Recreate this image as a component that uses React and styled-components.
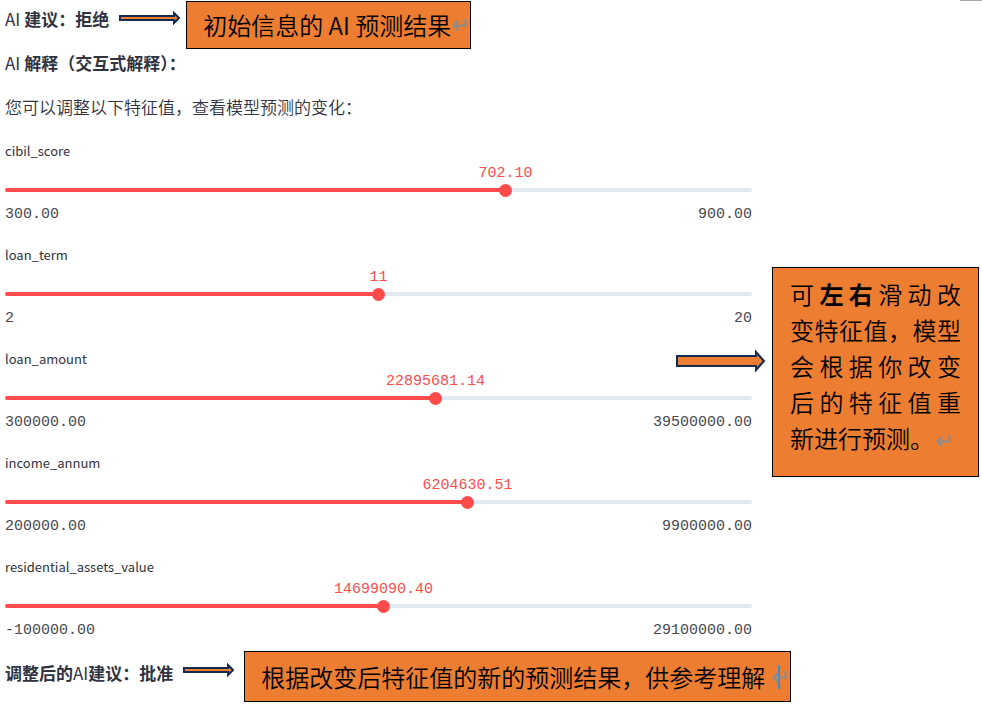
import React, { useState } from "react";
import styled, { createGlobalStyle } from "styled-components";

const sans = `"Noto Sans CJK SC", "Noto Sans", sans-serif`;
const mono = `"Liberation Mono", "DejaVu Sans Mono", monospace`;

const GlobalStyle = createGlobalStyle`
  *, *::before, *::after { box-sizing: border-box; }
  body { margin: 0; background: #fff; color: #31333f; font-family: ${sans}; }
  h1, h2, p { margin: 0; }
`;

const Page = styled.main`
  position: relative;
  padding: 1px 3px 0 5px;
  overflow-x: hidden;
`;

const CornerMark = styled.span`
  position: absolute;
  top: 0;
  right: 0;
  width: 22px;
  height: 1px;
  background: #a6a6a6;
`;

const ResultRow = styled.section`
  display: flex;
  align-items: flex-start;
`;

const Heading = styled.h2`
  font-size: 17px;
  font-weight: 700;
  line-height: ${(p) => p.$line}px;
  white-space: nowrap;
`;

const Latin = styled.span`
  font-weight: 400;
`;

const Intro = styled.p`
  margin: 16px 0 18px;
  font-size: 17px;
  font-weight: 350;
  line-height: 28px;
`;

const ArrowSlot = styled.span`
  display: flex;
  align-items: center;
  height: ${(p) => p.$height}px;
  margin: 0 ${(p) => p.$after}px 0 10px;
`;

const Note = styled.div`
  display: flex;
  align-items: center;
  justify-content: space-between;
  flex: 0 1 ${(p) => p.$width}px;
  height: ${(p) => p.$height}px;
  padding: 0 3px 0 16px;
  border: 1px solid #000;
  background: #ed7d31;
  color: #000;
  font-size: 24px;
  font-weight: 350;
  line-height: 36px;
  white-space: nowrap;
`;

const NoteEnd = styled.span`
  display: flex;
  align-items: center;
`;

const Caret = styled.span`
  flex: none;
  width: 2px;
  height: 24px;
  margin-right: -8px;
  background: #2f8fdc;
`;

const Columns = styled.div`
  display: grid;
  grid-template-columns: minmax(0, 1fr) 207px;
  column-gap: 20px;
  align-items: start;
  margin-bottom: 9px;
`;

const SliderList = styled.div`
  display: grid;
  row-gap: 17px;
`;

const Field = styled.div`
  display: flex;
  flex-direction: column;
`;

const FieldLabel = styled.label`
  font-size: 13px;
  line-height: 24px;
`;

const ValueLane = styled.div`
  position: relative;
  height: 20px;
`;

const Value = styled.output`
  position: absolute;
  transform: translateX(-50%);
  color: #ff4b4b;
  font-family: ${mono};
  font-size: 15px;
  line-height: 22px;
`;

const Control = styled.div`
  display: grid;
  align-items: center;
  height: 14px;

  & > * { grid-area: 1 / 1; }
`;

const Track = styled.div`
  height: 4px;
  border-radius: 2px;
  background: #e4e8f1;
  overflow: hidden;
`;

const Fill = styled.div`
  height: 4px;
  background: #ff4b4b;
`;

const Range = styled.input`
  appearance: none;
  width: calc(100% + 14px);
  height: 14px;
  margin: 0 -7px;
  background: transparent;
  cursor: pointer;

  &::-webkit-slider-thumb {
    appearance: none;
    width: 13px;
    height: 13px;
    border-radius: 50%;
    background: #ff4b4b;
  }
`;

const Limits = styled.div`
  display: flex;
  justify-content: space-between;
  margin-top: 7px;
  color: #464852;
  font-family: ${mono};
  font-size: 15px;
  line-height: 22px;
`;

const SideNote = styled.aside`
  position: relative;
  margin-top: 128px;
  padding: 8px 17px 20px;
  border: 1px solid #000;
  background: #ed7d31;
  color: #000;
  font-size: 24px;
  font-weight: 350;
  line-height: 36px;
`;

const NoteLine = styled.span`
  display: block;
  white-space: nowrap;
  text-align: justify;
  text-align-last: ${(p) => (p.$last ? "left" : "justify")};
`;

const Strong = styled.strong`
  font-weight: 700;
`;

const SideArrow = styled.span`
  position: absolute;
  top: 81px;
  right: calc(100% + 7px);
  display: flex;
`;

function SmallArrow({ length }) {
  const tip = length - 1;
  const neck = length - 6;
  return (
    <svg width={length} height="14" viewBox={`0 0 ${length} 14`} aria-hidden="true">
      <path
        d={`M1 5H${neck}V2L${tip} 7L${neck} 12V9H1Z`}
        fill="#ed7d31"
        stroke="#172c51"
        strokeWidth="2"
      />
    </svg>
  );
}

function LargeArrow() {
  return (
    <svg width="90" height="24" viewBox="0 0 90 24" aria-hidden="true">
      <path d="M1 7H80V3L88 12L80 21V17H1Z" fill="#ed7d31" stroke="#172c51" strokeWidth="2" />
    </svg>
  );
}

const ReturnSvg = styled.svg`
  flex: none;
  margin-left: ${(p) => p.$gap}px;
`;

function ReturnMark({ gap = 0 }) {
  return (
    <ReturnSvg $gap={gap} width="15" height="14" viewBox="0 0 15 14" aria-hidden="true">
      <path d="M13.5 1V7.5H1.5M6.5 2.5L1.5 7.5L6.5 12.5" fill="none" stroke="#8a8c90" strokeWidth="2" />
    </ReturnSvg>
  );
}

const features = [
  { name: "cibil_score", min: 300, max: 900, value: 702.1, digits: 2 },
  { name: "loan_term", min: 2, max: 20, value: 11, digits: 0 },
  { name: "loan_amount", min: 300000, max: 39500000, value: 22895681.14, digits: 2 },
  { name: "income_annum", min: 200000, max: 9900000, value: 6204630.51, digits: 2 },
  { name: "residential_assets_value", min: -100000, max: 29100000, value: 14699090.4, digits: 2 },
];

function FeatureSlider({ name, min, max, value: initial, digits }) {
  const [value, setValue] = useState(initial);
  const percent = `${((value - min) / (max - min)) * 100}%`;
  return (
    <Field>
      <FieldLabel htmlFor={name}>{name}</FieldLabel>
      <ValueLane>
        <Value htmlFor={name} style={{ left: percent }}>{value.toFixed(digits)}</Value>
      </ValueLane>
      <Control>
        <Track>
          <Fill style={{ width: percent }} />
        </Track>
        <Range
          id={name}
          type="range"
          min={min}
          max={max}
          step={digits ? "any" : 1}
          value={value}
          onChange={(e) => setValue(Number(e.target.value))}
        />
      </Control>
      <Limits>
        <span>{min.toFixed(digits)}</span>
        <span>{max.toFixed(digits)}</span>
      </Limits>
    </Field>
  );
}

export default function App() {
  return (
    <Page>
      <GlobalStyle />
      <CornerMark />
      <ResultRow>
        <Heading $line={36}><Latin>AI</Latin> 建议：拒绝</Heading>
        <ArrowSlot $height={34} $after={6}><SmallArrow length={61} /></ArrowSlot>
        <Note $width={285} $height={48}>
          初始信息的 AI 预测结果
          <NoteEnd><ReturnMark /></NoteEnd>
        </Note>
      </ResultRow>
      <Heading $line={28}><Latin>AI</Latin> 解释（交互式解释）：</Heading>
      <Intro>您可以调整以下特征值，查看模型预测的变化：</Intro>
      <Columns>
        <SliderList>
          {features.map((f) => <FeatureSlider key={f.name} {...f} />)}
        </SliderList>
        <SideNote>
          <SideArrow><LargeArrow /></SideArrow>
          <NoteLine>可<Strong>左右</Strong>滑动改</NoteLine>
          <NoteLine>变特征值，模型</NoteLine>
          <NoteLine>会根据你改变</NoteLine>
          <NoteLine>后的特征值重</NoteLine>
          <NoteLine $last>新进行预测。<ReturnMark gap={2} /></NoteLine>
        </SideNote>
      </Columns>
      <ResultRow>
        <Heading $line={44}>调整后的<Latin>AI</Latin>建议：批准</Heading>
        <ArrowSlot $height={38} $after={10}><SmallArrow length={51} /></ArrowSlot>
        <Note $width={547} $height={51}>
          根据改变后特征值的新的预测结果，供参考理解
          <NoteEnd><Caret /><ReturnMark /></NoteEnd>
        </Note>
      </ResultRow>
    </Page>
  );
}
